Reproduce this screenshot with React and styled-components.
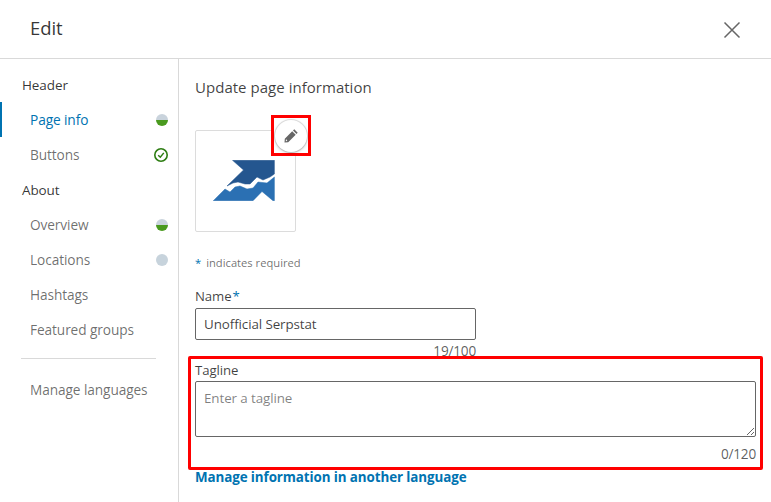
import React from "react";
import styled, { createGlobalStyle } from "styled-components";

const Global = createGlobalStyle`
  html, body { margin: 0; padding: 0; background: #fff; }
  body { font-family: "Open Sans", "Noto Sans", sans-serif; color: rgba(0,0,0,.75); }
  * { box-sizing: border-box; }
`;

const Modal = styled.div`
  width: 771px;
  height: 502px;
  overflow: hidden;
  display: flex;
  flex-direction: column;
  background: #fff;
`;
const Header = styled.header`
  height: 59px;
  flex: none;
  border-bottom: 1px solid #d9d9d9;
  display: flex;
  align-items: center;
  justify-content: space-between;
  padding: 0 29px 3px 30px;
`;
const Title = styled.h1`
  margin: 0;
  font-size: 18.5px;
  font-weight: 400;
  letter-spacing: -0.1px;
  color: rgba(0,0,0,.8);
`;
const CloseBtn = styled.button`
  width: 20px;
  height: 20px;
  padding: 0;
  border: 0;
  background: none;
  display: flex;
  margin-top: 4px;
`;
const Body = styled.div`
  flex: 1;
  display: flex;
  min-height: 0;
`;
const Sidebar = styled.nav`
  width: 179px;
  flex: none;
  border-right: 1px solid #d9d9d9;
  padding-top: 8px;
`;
const Group = styled.div`
  height: 35px;
  display: flex;
  align-items: center;
  padding-left: 22px;
  font-size: 13.5px;
  font-weight: 500;
  color: rgba(0,0,0,.8);
  letter-spacing: -0.1px;
`;
const Item = styled.div`
  height: 35px;
  display: flex;
  align-items: center;
  justify-content: space-between;
  padding: 0 9px 0 28px;
  border-left: 2px solid ${p => (p.$active ? "#0073b1" : "transparent")};
  font-size: 13.7px;
  letter-spacing: -0.1px;
  color: ${p => (p.$active ? "#0073b1" : "rgba(0,0,0,.58)")};
  font-weight: ${p => (p.$active ? 500 : 400)};
`;
const Dot = styled.span`
  width: 12px;
  height: 12px;
  border-radius: 50%;
  margin-right: 1px;
  background: ${p =>
    p.$half ? "linear-gradient(#c9d3dc 0 50%, #4a9a1f 50% 100%)" : "#c7d3dc"};
`;
const Rule = styled.hr`
  margin: 11px 22px 13px 21px;
  border: 0;
  border-top: 1px solid #d9d9d9;
`;
const Main = styled.main`
  flex: 1;
  padding: 17px 0 0 16px;
  min-width: 0;
`;
const Heading = styled.h2`
  margin: 0 0 32px;
  height: 22px;
  line-height: 22px;
  font-size: 15px;
  font-weight: 400;
  letter-spacing: 0.03px;
  color: rgba(0,0,0,.75);
`;
const LogoBox = styled.div`
  position: relative;
  width: 101px;
  height: 102px;
  border: 1px solid #dcdcdc;
  border-radius: 2px;
  display: flex;
  align-items: center;
  justify-content: center;
`;
const LogoArt = styled.svg`
  margin: 0 3px 1px 0;
`;
const EditMark = styled.div`
  position: absolute;
  left: 75px;
  top: -16px;
  width: 40px;
  height: 41px;
  border: 3px solid #f00;
  background: #fff;
  display: flex;
  align-items: center;
  justify-content: center;
`;
const EditCircle = styled.button`
  width: 32px;
  height: 32px;
  padding: 0;
  border: 0;
  border-radius: 50%;
  background: #fff;
  box-shadow: 0 0 0 1px rgba(0,0,0,.1), 0 1px 3px rgba(0,0,0,.25);
  display: flex;
  align-items: center;
  justify-content: center;
`;
const Required = styled.p`
  margin: 22px 0 0;
  height: 18px;
  line-height: 18px;
  font-size: 11.2px;
  color: rgba(0,0,0,.58);
`;
const Star = styled.span`
  color: #0073b1;
  margin-left: ${p => p.$before || 0}px;
  margin-right: ${p => p.$gap || 0}px;
`;
const Label = styled.label`
  display: block;
  height: 18px;
  line-height: 18px;
  font-size: 13.2px;
  color: rgba(0,0,0,.75);
  letter-spacing: -0.1px;
`;
const NameField = styled.div`
  width: 281px;
  margin-top: 15px;
`;
const Input = styled.input`
  display: block;
  width: 100%;
  height: 32px;
  margin-top: 3px;
  padding: 0 8px;
  border: 1px solid #666;
  border-radius: 2px;
  font: 13.4px "Open Sans", sans-serif;
  letter-spacing: -0.1px;
  color: rgba(0,0,0,.75);
  outline: none;
`;
const Counter = styled.div`
  height: 16px;
  margin-top: ${p => p.$offset || 0}px;
  line-height: 22px;
  text-align: right;
  font-size: 13.6px;
  letter-spacing: -0.2px;
  color: rgba(0,0,0,.65);
`;
const TaglineBox = styled.section`
  width: 575px;
  height: 114px;
  margin-left: -7px;
  padding: 2px 0 0 4px;
  border: 3px solid #f00;
  border-radius: 2px;
`;
const TaglineInner = styled.div`
  width: 561px;
`;
const Textarea = styled.textarea`
  display: block;
  width: 100%;
  height: 56px;
  margin-top: 2px;
  padding: 7px 8px;
  border: 1px solid #666;
  border-radius: 2px;
  font: 13.4px "Open Sans", sans-serif;
  letter-spacing: -0.1px;
  outline: none;
  &::placeholder { color: rgba(0,0,0,.5); opacity: 1; }
`;
const ManageLink = styled.a`
  display: block;
  margin-top: -2px;
  height: 19px;
  line-height: 19px;
  font-size: 13.4px;
  font-weight: 700;
  color: #0073b1;
  letter-spacing: -0.1px;
`;

const Check = () => (
  <svg width="16" height="16" viewBox="0 0 16 16" fill="none" stroke="#2d7d12">
    <circle cx="8" cy="8" r="6.2" strokeWidth="1.6" />
    <path d="M5.2 8.2 7.3 10.2 10.8 5.9" strokeWidth="1.5" />
  </svg>
);

const Logo = () => (
  <LogoArt width="62" height="41" viewBox="213 160 62 41">
    <path
      fill="#24568f"
      stroke="#24568f"
      strokeWidth="0.5"
      strokeLinejoin="round"
      d="M232.5 160.3H274.4V174L270 177 263 180 257 177 250 184 245 184 238 182 233 183 227 186 243.5 170Z"
    />
    <path
      fill="#2b70b3"
      stroke="#2b70b3"
      strokeWidth="0.5"
      strokeLinejoin="round"
      d="M213.3 200.7 225 189 230 192 235 187 240 186 247 189 253 188 258 182 267 183 274.4 177V200.7H273L262 191.5 253 200.7Z"
    />
  </LogoArt>
);

const Pencil = () => (
  <svg width="16" height="16" viewBox="0 0 16 16" fill="#666">
    <path d="M11.3 1.3 14.7 4.7 13.5 6 10 2.5Z" />
    <path d="M9.2 3.3 12.7 6.8 5.2 14.2 1.5 14.6 1.8 10.8ZM3 11 2.8 13.3 4.4 13.1Z" fillRule="evenodd" />
  </svg>
);

const Item2 = ({ label, active, status }) => (
  <Item $active={active}>
    <span>{label}</span>
    {status === "half" && <Dot $half />}
    {status === "empty" && <Dot />}
    {status === "done" && <Check />}
  </Item>
);

export default function App() {
  return (
    <Modal>
      <Global />
      <Header>
        <Title>Edit</Title>
        <CloseBtn aria-label="Close">
          <svg width="20" height="20" viewBox="0 0 20 20" stroke="#666" strokeWidth="1.5" fill="none">
            <path d="M2.5 2.5 17.5 17.5M17.5 2.5 2.5 17.5" />
          </svg>
        </CloseBtn>
      </Header>
      <Body>
        <Sidebar>
          <Group>Header</Group>
          <Item2 label="Page info" active status="half" />
          <Item2 label="Buttons" status="done" />
          <Group>About</Group>
          <Item2 label="Overview" status="half" />
          <Item2 label="Locations" status="empty" />
          <Item2 label="Hashtags" />
          <Item2 label="Featured groups" />
          <Rule />
          <Item2 label="Manage languages" />
        </Sidebar>
        <Main>
          <Heading>Update page information</Heading>
          <LogoBox>
            <Logo />
            <EditMark>
              <EditCircle aria-label="Edit logo">
                <Pencil />
              </EditCircle>
            </EditMark>
          </LogoBox>
          <Required>
            <Star $gap={5}>*</Star>indicates required
          </Required>
          <NameField>
            <Label>
              Name<Star $before={1}>*</Star>
            </Label>
            <Input defaultValue="Unofficial Serpstat" />
            <Counter>19/100</Counter>
          </NameField>
          <TaglineBox>
            <TaglineInner>
              <Label>Tagline</Label>
              <Textarea placeholder="Enter a tagline" />
              <Counter $offset={6}>0/120</Counter>
            </TaglineInner>
          </TaglineBox>
          <ManageLink>Manage information in another language</ManageLink>
        </Main>
      </Body>
    </Modal>
  );
}
